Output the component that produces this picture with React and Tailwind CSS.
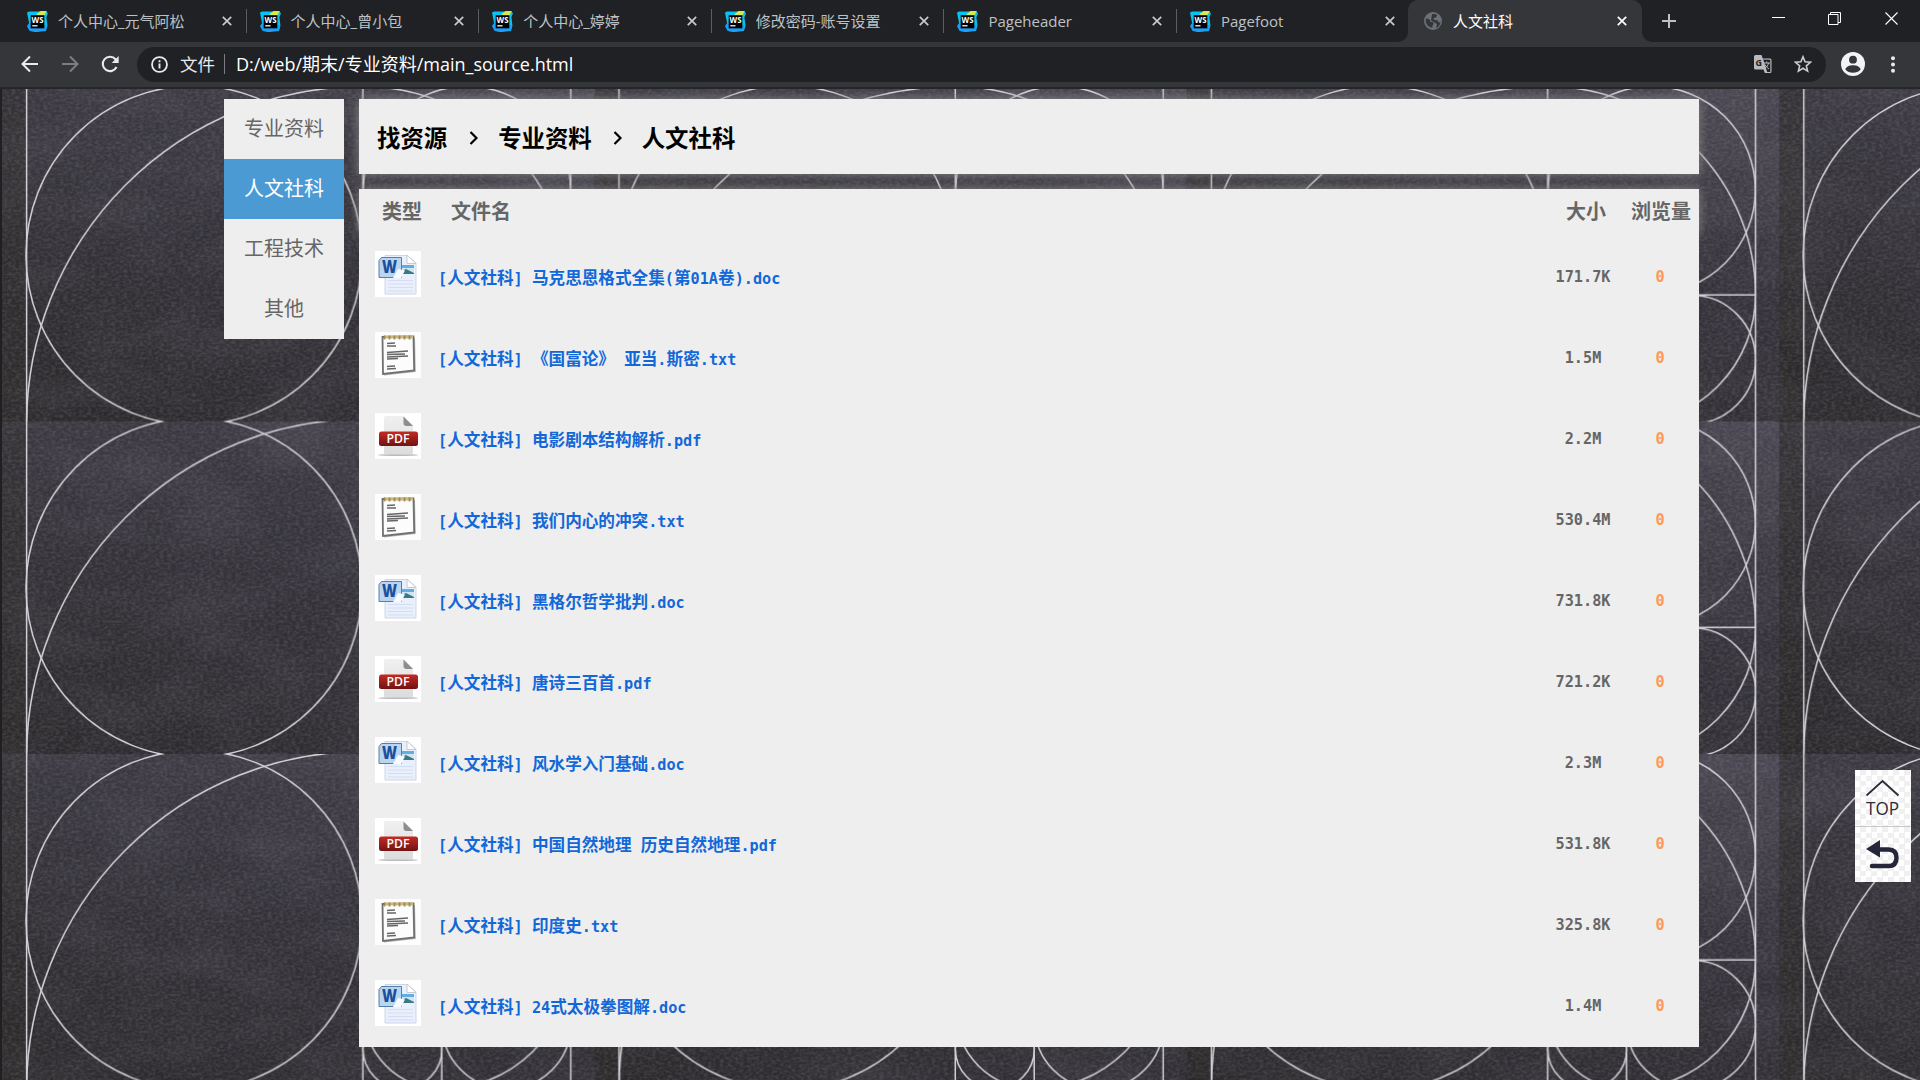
import React from "react";

const TABS = ["个人中心_元气阿松", "个人中心_曾小包", "个人中心_婷婷", "修改密码-账号设置", "Pageheader", "Pagefoot"];

const MENU = ["专业资料", "人文社科", "工程技术", "其他"];

const FILES = [
  { type: "doc", name: "马克思恩格式全集(第01A卷).doc", size: "171.7K" },
  { type: "txt", name: "《国富论》 亚当.斯密.txt", size: "1.5M" },
  { type: "pdf", name: "电影剧本结构解析.pdf", size: "2.2M" },
  { type: "txt", name: "我们内心的冲突.txt", size: "530.4M" },
  { type: "doc", name: "黑格尔哲学批判.doc", size: "731.8K" },
  { type: "pdf", name: "唐诗三百首.pdf", size: "721.2K" },
  { type: "doc", name: "风水学入门基础.doc", size: "2.3M" },
  { type: "pdf", name: "中国自然地理 历史自然地理.pdf", size: "531.8K" },
  { type: "txt", name: "印度史.txt", size: "325.8K" },
  { type: "doc", name: "24式太极拳图解.doc", size: "1.4M" },
];

/* Latin runs are set in a monospace face, CJK runs in Noto Sans CJK. */
function Mixed({ text }) {
  return text.split(/([\x20-\x7e]+)/).filter(Boolean).map((part, i) =>
    /^[\x20-\x7e]/.test(part) ? (
      <span key={i} className="font-['DejaVu_Sans_Mono',monospace] text-[15.2px] whitespace-pre">{part}</span>
    ) : (
      <span key={i}>{part}</span>
    )
  );
}

function WebStormIcon() {
  return (
    <svg viewBox="0 0 20 20" className="h-[21px] w-[21px] shrink-0">
      <path d="M0 1.500 2 .5l8 0L17 0l3 2-1.500 4 1 8-1.500 5-5 .5-5 .5-5-1-.500-5z" fill="#07c3f2" />
      <path d="M1.500 12 0 14.500l2.500 4.500 7 .5L18 18.500l1-5z" fill="#1d9df5" />
      <path d="m9 3 4-3h6l-3 5-5 1z" fill="#d9e84a" />
      <rect x="3.500" y="4" width="13" height="12.500" fill="#000" />
      <text x="10" y="11" textAnchor="middle" fontSize="7.500" fontWeight="700" fill="#fff" fontFamily="Open Sans, sans-serif">WS</text>
      <rect x="5" y="13.500" width="5" height="1.200" fill="#fff" />
    </svg>
  );
}

function TabClose({ className }) {
  return (
    <svg viewBox="0 0 10 10" className={"h-[10px] w-[10px] shrink-0 " + className}>
      <path d="m.8.8 8.400 8.400M9.200.8.8 9.200" stroke="currentColor" strokeWidth="1.700" />
    </svg>
  );
}

function TabStrip() {
  return (
    <div className="flex h-[42px] items-stretch bg-[#202124] pl-[14px] text-[15px] text-[#bdc1c6]">
      {TABS.map((t, i) => (
        <div key={t} className="flex w-[232.600px] shrink-0 items-center pl-[13px]">
          <WebStormIcon />
          <span className="ml-[10px] flex-1 whitespace-nowrap">{t}</span>
          <TabClose className="text-[#c8cacd]" />
          <span className={"ml-[14px] h-6 w-px " + (i === 5 ? "bg-transparent" : "bg-[#5b5d61]")} />
        </div>
      ))}
      <div className="relative -ml-[1.600px] flex w-[234px] shrink-0 items-center rounded-t-[10px] bg-[#35363a] pl-[16px] text-white">
        <svg viewBox="0 0 10 10" className="absolute bottom-0 -left-[10px] h-[10px] w-[10px]"><path d="M10 0v10H0A10 10 0 0 0 10 0z" fill="#35363a" /></svg>
        <svg viewBox="0 0 10 10" className="absolute bottom-0 -right-[10px] h-[10px] w-[10px]"><path d="M0 0v10h10A10 10 0 0 1 0 0z" fill="#35363a" /></svg>
        <svg viewBox="0 0 18 18" className="h-[18px] w-[18px]">
          <circle cx="9" cy="9" r="9" fill="#6d7176" />
          <path d="M2 6.500c3 0 4 1 4 2.500s3 .5 3.500 2-1.500 2-1 4.800C4.500 15.500 2 12.500 1.700 9z M8 2.200c1.500-.6 3.800-.3 5.300.7L12 5.500 9.500 6 10 8l3.500.2 1.200 2.500 1.700-1C16.500 13 14 15.500 12 16l1-4-2.500-1.500L7 8.500l.5-3z" fill="#35363a" />
        </svg>
        <span className="ml-[11px] flex-1">人文社科</span>
        <TabClose className="mr-[15px] text-white" />
      </div>
      <div className="flex flex-1 items-center text-white">
        <svg viewBox="0 0 14 14" className="ml-[20px] h-[14px] w-[14px]"><path d="M7 0v14M0 7h14" stroke="#bdc1c6" strokeWidth="2" /></svg>
        <div className="mb-[5px] ml-auto flex items-center pr-[22px]">
          <svg viewBox="0 0 13 13" className="h-[13px] w-[13px]"><path d="M0 5.500h13" stroke="currentColor" /></svg>
          <svg viewBox="0 0 13 13" className="ml-[43px] h-[13px] w-[13px]"><path d="M.5 2.500h9.500v10H.5zM2.500 2.500v-2h10v10h-2.500" fill="none" stroke="currentColor" /></svg>
          <svg viewBox="0 0 13 13" className="ml-[44px] h-[13px] w-[13px]"><path d="m.5.5 12 12m0-12-12 12" stroke="currentColor" strokeWidth="1.100" /></svg>
        </div>
      </div>
    </div>
  );
}

function Toolbar() {
  return (
    <div className="flex h-[47px] items-center border-b-2 border-[#252628] bg-[#35363a] pb-px pl-[21px] text-[#e8eaed]">
      <svg viewBox="0 0 18 18" className="h-[18px] w-[18px]"><path d="M17 9H2M9 1.500 1.500 9 9 16.500" fill="none" stroke="currentColor" strokeWidth="2" /></svg>
      <svg viewBox="0 0 18 18" className="ml-[22px] h-[18px] w-[18px] text-[#7b7d80]"><path d="M1 9h15M9 1.500 16.500 9 9 16.500" fill="none" stroke="currentColor" strokeWidth="2" /></svg>
      <svg viewBox="0 0 18 18" className="ml-[22px] h-[18px] w-[18px]"><path d="M15.500 12A7.200 7.200 0 1 1 14.500 4.300L16.500 6.500" fill="none" stroke="currentColor" strokeWidth="2.100" /><path d="M17.700 1v7h-7z" fill="currentColor" /></svg>
      <div className="ml-[18px] flex h-[35px] w-[1689px] items-center rounded-full bg-[#202124] pl-[14px] text-[17.500px]">
        <svg viewBox="0 0 18 18" className="h-[17px] w-[17px]"><circle cx="9" cy="9" r="7.900" fill="none" stroke="currentColor" strokeWidth="1.900" /><path d="M9 8v5.200M9 4.600v2" stroke="currentColor" strokeWidth="2" /></svg>
        <span className="ml-[12px] whitespace-nowrap">文件</span>
        <span className="ml-[9px] h-5 w-px bg-[#7c7e82]" />
        <span className="ml-[11px] flex-1 text-[18px] whitespace-nowrap text-white">D:/web/期末/专业资料/main_source.html</span>
        <svg viewBox="0 0 18 18" className="h-[18px] w-[18px]">
          <path d="M1.500 0h6l1.200 3.500H16A1.500 1.500 0 0 1 17.500 5v11.500A1.500 1.500 0 0 1 16 18h-5.200l-1.300-3.500h-8A1.500 1.500 0 0 1 0 13V1.500A1.500 1.500 0 0 1 1.500 0z" fill="#b9bbbe" />
          <path d="m9.200 4.500 4 12.400H16.300V4.700z" fill="#202124" />
          <text x="1.400" y="10.500" fontSize="9" fontWeight="700" fill="#202124" fontFamily="Open Sans, sans-serif">G</text>
          <path d="M9.500 8h6.500M12.700 6.500V8M10.500 13.500c2.500-1.500 3.500-3 4-5.500M11 9.500c1 2 2.500 3.500 4 4.500" stroke="#b9bbbe" fill="none" />
        </svg>
        <svg viewBox="0 0 20 20" className="mr-[14px] ml-[22px] h-[18px] w-[18px]"><path d="m10 2 2.300 5.600 6 .5-4.600 3.900 1.400 5.900L10 14.700l-5.100 3.200L6.300 12 1.700 8.100l6-.5z" fill="none" stroke="#c9cbce" strokeWidth="1.800" /></svg>
      </div>
      <svg viewBox="0 0 24 24" className="ml-[15px] h-6 w-6"><circle cx="12" cy="12" r="12" fill="#f1f3f4" /><circle cx="12" cy="7.700" r="3.900" fill="#35363a" /><path d="M4.300 17.300c1.500-3.400 5-4 7.700-4s6.200.6 7.700 4c-2 2.700-4.700 3.500-7.700 3.500s-5.700-.8-7.700-3.500z" fill="#35363a" /></svg>
      <svg viewBox="0 0 4 17" className="ml-[26px] h-[17px] w-1"><g fill="currentColor"><circle cx="2" cy="2.200" r="2" /><circle cx="2" cy="8.500" r="2" /><circle cx="2" cy="14.800" r="2" /></g></svg>
    </div>
  );
}

/* Chalkboard tile with a golden-ratio spiral, repeated over the page. */
function Chalkboard() {
  return (
    <svg className="absolute inset-0 h-full w-full" width="1920" height="991">
      <defs>
        <linearGradient id="slate" x1="0" y1="1" x2="1" y2="0">
          <stop offset="0" stopColor="#2b292b" />
          <stop offset=".3" stopColor="#312f34" />
          <stop offset=".65" stopColor="#343139" />
          <stop offset="1" stopColor="#45424d" />
        </linearGradient>
        <linearGradient id="sheen" x1="0" y1="0" x2="0" y2="1">
          <stop offset="0" stopColor="#55515e" stopOpacity=".25" />
          <stop offset=".4" stopColor="#48454f" stopOpacity=".12" />
          <stop offset=".75" stopColor="#2e2b2f" stopOpacity=".08" />
          <stop offset="1" stopColor="#29272a" stopOpacity=".25" />
        </linearGradient>
        <filter id="grain" x="0" y="0" width="100%" height="100%">
          <feTurbulence type="fractalNoise" baseFrequency=".25 .38" numOctaves="3" seed="4" />
          <feColorMatrix values="0 0 0 0 .75  0 0 0 0 .73  0 0 0 0 .8  .55 0 0 0 -.19" />
        </filter>
        <filter id="clouds" x="0" y="0" width="100%" height="100%">
          <feTurbulence type="fractalNoise" baseFrequency=".012 .022" numOctaves="4" seed="9" />
          <feColorMatrix values="0 0 0 0 .55  0 0 0 0 .53  0 0 0 0 .62  .6 0 0 0 -.22" />
        </filter>
        <pattern id="tile" x="2" y="0" width="592.4" height="332.5" patternUnits="userSpaceOnUse">
          <rect width="593" height="333" fill="url(#slate)" />
          <rect width="593" height="333" fill="url(#sheen)" />
          <rect width="24" height="333" fill="#2a2826" opacity=".35" />
          <g fill="none" stroke="#d3d0d6" strokeWidth="1.500">
            <path d="M24.600 0V333M360.900 0V333M568.800 0V333M360.900 206H568.800M439.800 206V333M360.900 255H440" />
            <ellipse cx="192" cy="166.250" rx="168" ry="169.500" />
            <circle cx="465" cy="101" r="103.600" />
            <circle cx="504.500" cy="270.500" r="64.300" />
            <circle cx="400.500" cy="295" r="39.500" />
            <path d="M24.600 335A336.500 337.500 0 0 1 361 -2.500A207.800 208.500 0 0 1 568.800 206A129 129 0 0 1 439.800 335A79 79 0 0 1 361 255A49 49 0 0 1 410 206" />
          </g>
        </pattern>
      </defs>
      <rect width="1920" height="991" fill="url(#tile)" />
      <rect width="1920" height="991" filter="url(#clouds)" opacity=".22" />
      <rect width="1920" height="991" filter="url(#grain)" opacity=".48" />
      <rect width="2" height="991" fill="#1f2022" />
    </svg>
  );
}

function FileIcon({ type }) {
  if (type === "doc")
    return (
      <svg viewBox="0 0 46 46" className="block h-[46px] w-[46px] bg-white">
        <path d="M10 4.500h22l9 7.500v31H10z" fill="#e9effb" stroke="#cdd6e8" />
        <path d="M32 4v8.500h9z" fill="#fff" stroke="#c5cad3" />
        <rect x="26" y="14" width="13" height="9" fill="#cfe6f2" />
        <path d="M26 14h13v3H26z" fill="#62aee0" /><path d="m27 20 4-2 8 4v1H27z" fill="#397a85" />
        <path d="M13 29.500h25M13 33h25M13 36.500h25M13 40h25" stroke="#d3ddf3" />
        <path d="M6.500 6.500h20v20H4v-17z" fill="#b9d5ef" stroke="#557fab" />
        <path d="m23 18 7 1.500-4 7.500h-8z" fill="#f7faff" />
        <text x="14.500" y="21.500" textAnchor="middle" fontSize="17" fontWeight="800" fill="#1d4f9c" fontFamily="Open Sans, sans-serif" textLength="15" lengthAdjust="spacingAndGlyphs">W</text>
      </svg>
    );
  if (type === "txt")
    return (
      <svg viewBox="0 0 46 46" className="block h-[46px] w-[46px] bg-[#fdfdfb]">
        <path d="m9 6 31 0 .8 34L9 43.500z" fill="#999" opacity=".7" />
        <path d="m7.500 5 31-.5.700 34L8 42z" fill="#fcfcfc" stroke="#6f7072" strokeWidth="1.800" />
        <path d="M9 5h29" stroke="#cdb87b" strokeWidth="3" />
        <path d="M9.500 3.500v4m5-4v4m5-4v4m5-4v4m5-4v4m5-4v4" stroke="#8f7b4c" strokeWidth="1.800" opacity=".8" />
        <path d="m12 11.500 8-.5m-8 3 9 0m-9 6.500 21-1.500M12 22.500l18-.5M12 25l21-1M12 27l11-.5m-11 8 8-.5m-8 3 9-.5" stroke="#666" strokeWidth="1.300" />
      </svg>
    );
  return (
    <svg viewBox="0 0 46 46" className="block h-[46px] w-[46px] bg-white">
      <defs>
        <linearGradient id="pdfPage" x1="0" y1="0" x2="0" y2="1"><stop offset="0" stopColor="#f0f0f0" /><stop offset="1" stopColor="#dcdcdc" /></linearGradient>
        <linearGradient id="pdfBand" x1="0" y1="0" x2="0" y2="1"><stop offset="0" stopColor="#c52a23" /><stop offset="1" stopColor="#701313" /></linearGradient>
      </defs>
      <ellipse cx="23" cy="42" rx="20" ry="1" fill="#bbb" />
      <path d="M11 3h17.500L38 12.500V39q0 2.500-3 2.500H12q-3 0-3-2.500V5q0-2 2-2z" fill="url(#pdfPage)" />
      <path d="M28.500 3.500 38 13h-6.500q-3 0-3-3z" fill="#8d8d8d" />
      <rect x="4" y="18.500" width="39" height="14.500" rx="2.500" fill="url(#pdfBand)" />
      <text x="23" y="30" textAnchor="middle" fontSize="12" fontWeight="600" fill="#fff" fontFamily="Open Sans, sans-serif" textLength="23" lengthAdjust="spacingAndGlyphs">PDF</text>
    </svg>
  );
}

function Sidebar() {
  return (
    <nav className="h-[240px] w-[120px] shrink-0 bg-[#eeeeee] text-[20px] text-[#666]">
      {MENU.map((m) => (
        <div key={m} className={"flex h-[60px] items-center justify-center " + (m === "人文社科" ? "bg-[#4c9ad4] text-white" : "")}>{m}</div>
      ))}
    </nav>
  );
}

function Chevron() {
  return (
    <svg viewBox="0 0 9 14" className="h-[14px] w-[9px]"><path d="m1.500 1 6 6-6 6" fill="none" stroke="#000" strokeWidth="2.200" /></svg>
  );
}

function FileRow({ file }) {
  return (
    <div className="flex h-[81px] items-start pt-[16px] pl-[16px] font-bold">
      <FileIcon type={file.type} />
      <div className="ml-[17px] flex-1 pt-[15px] text-[16.620px] leading-6 whitespace-nowrap text-[#1268d8]">
        <Mixed text="[人文社科] " /><Mixed text={file.name} />
      </div>
      <div className="w-[80px] pt-[14px] text-center font-['DejaVu_Sans_Mono',monospace] text-[15.200px] leading-6 text-[#666]">{file.size}</div>
      <div className="mr-[13px] ml-[11px] w-[52px] pt-[14px] text-center font-['DejaVu_Sans_Mono',monospace] text-[15.200px] leading-6 text-[#ff9955]">0</div>
    </div>
  );
}

function SideButtons() {
  return (
    <div className="absolute top-[681px] left-[1855px] flex w-[56px] flex-col gap-px bg-[#c8c8c8]">
      {["top", "back"].map((k) => (
        <div key={k} className="h-[55.500px] bg-white bg-[conic-gradient(#f0f0f0_25%,#fff_0_50%,#f0f0f0_0_75%,#fff_0)] bg-[length:11px_11px]">
          {k === "top" ? (
            <svg viewBox="0 0 56 55" className="h-[55px] w-[56px]">
              <path d="m11.500 25.500 16-14.500 16 14.500" fill="none" stroke="#2b2b3b" strokeWidth="1.800" />
              <text x="27.500" y="44.500" textAnchor="middle" fontSize="18.500" fill="#2b2b3b" fontFamily="Open Sans, sans-serif" textLength="33" lengthAdjust="spacingAndGlyphs">TOP</text>
            </svg>
          ) : (
            <svg viewBox="0 0 56 55" className="h-[55px] w-[56px]">
              <path d="M24 22.500h9.500q8 0 8 8.300t-8 8.300H17" fill="none" stroke="#26263a" strokeWidth="4.500" strokeLinecap="round" />
              <path d="m11 22 14-9v17.500z" fill="#26263a" />
            </svg>
          )}
        </div>
      ))}
    </div>
  );
}

export default function App() {
  return (
    <div className="flex h-[1080px] w-[1920px] flex-col overflow-hidden bg-[#35363a] font-['Open_Sans','Noto_Sans_CJK_SC',sans-serif]">
      <TabStrip />
      <Toolbar />
      <main className="relative min-h-0 flex-1 overflow-hidden">
        <Chalkboard />
        <div className="relative flex items-start pt-[10px] pl-[224px]">
          <Sidebar />
          <div className="ml-[15px] flex w-[1340px] flex-col gap-[15px]">
            <header className="flex h-[75px] items-center bg-[#eeeeee] pt-[5px] pl-[18px] text-[23.400px] font-bold text-black shadow-[0_0_10px_#888]">
              <span>找资源</span>
              <span className="flex w-[51px] justify-center pb-[3px] pl-[2px]"><Chevron /></span>
              <span>专业资料</span>
              <span className="flex w-[50px] justify-center pb-[3px] pl-[2px]"><Chevron /></span>
              <span>人文社科</span>
            </header>
            <section className="h-[858px] bg-[#eeeeee]">
              <div className="flex h-[46px] items-center pr-[8px] pl-[23px] text-[20px] font-bold text-[#666] shadow-[0_0_10px_#888]">
                <span>类型</span>
                <span className="ml-[29px] flex-1">文件名</span>
                <span>大小</span>
                <span className="ml-[25px]">浏览量</span>
              </div>
              <div className="relative bg-[#eeeeee]">
                {FILES.map((f) => <FileRow key={f.name} file={f} />)}
              </div>
            </section>
          </div>
        </div>
        <SideButtons />
      </main>
    </div>
  );
}
